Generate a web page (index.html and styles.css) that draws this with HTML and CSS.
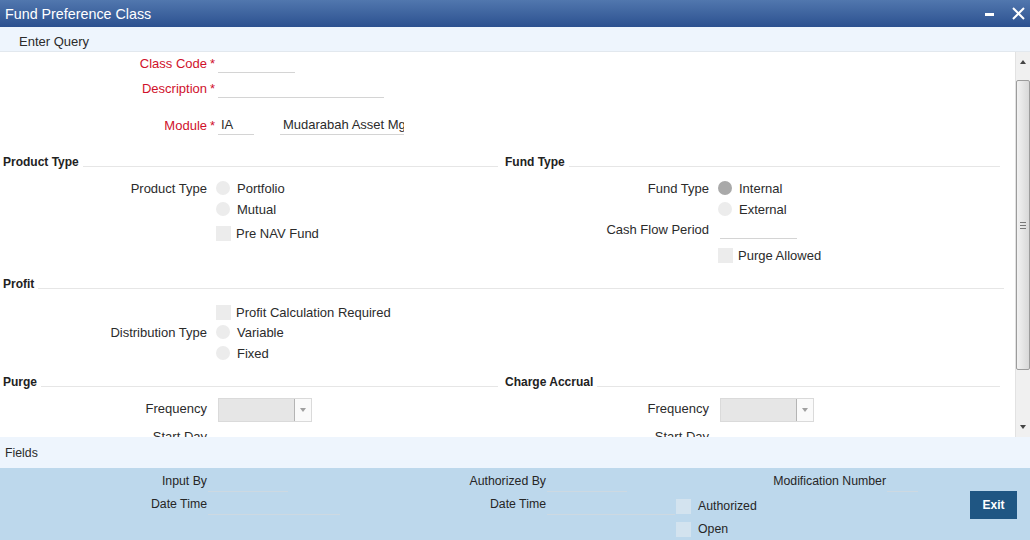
FILE: index.html
```html
<!DOCTYPE html>
<html lang="en">
<head>
    <meta charset="UTF-8">
    <title>Fund Preference Class</title>
    <link rel="stylesheet" href="styles.css">
</head>
<body>
    <div class="window">
        <div class="titlebar">
            <span class="title">Fund Preference Class</span>
            <div class="winbtns">
                <span class="minbtn"></span>
                <svg class="closebtn" width="13" height="13" viewBox="0 0 13 13">
                    <path d="M1 1 L12 12 M12 1 L1 12" stroke="#fff" stroke-width="2" fill="none"/>
                </svg>
            </div>
        </div>
        <div class="toolbar"><span>Enter Query</span></div>

        <div class="main">
            <div class="form">
                <div class="row tall">
                    <span class="lbl req">Class Code</span><span class="star">*</span>
                    <input class="txt w77" type="text">
                </div>
                <div class="row tall mt3">
                    <span class="lbl req">Description</span><span class="star">*</span>
                    <input class="txt w166" type="text">
                </div>
                <div class="row tall mt15">
                    <span class="lbl req">Module</span><span class="star">*</span>
                    <input class="txt w36" type="text" value="IA">
                    <input class="txt w124 ml26" type="text" value="Mudarabah Asset Mgr">
                </div>

                <div class="cols mt18">
                    <div class="col">
                        <div class="sec-head">Product Type</div>
                        <div class="row mt8">
                            <span class="lbl">Product Type</span><span class="gap"></span>
                            <span class="radio"></span><span>Portfolio</span>
                        </div>
                        <div class="row mt1">
                            <span class="lbl"></span><span class="gap"></span>
                            <span class="radio"></span><span>Mutual</span>
                        </div>
                        <div class="row mt4">
                            <span class="lbl"></span><span class="gap"></span>
                            <span class="check"></span><span>Pre NAV Fund</span>
                        </div>
                    </div>
                    <div class="col">
                        <div class="sec-head">Fund Type</div>
                        <div class="row mt8">
                            <span class="lbl">Fund Type</span><span class="gap"></span>
                            <span class="radio on"></span><span>Internal</span>
                        </div>
                        <div class="row mt1">
                            <span class="lbl"></span><span class="gap"></span>
                            <span class="radio"></span><span>External</span>
                        </div>
                        <div class="row tall mtn1">
                            <span class="lbl">Cash Flow Period</span><span class="star"></span>
                            <input class="txt w77" type="text">
                        </div>
                        <div class="row mt5">
                            <span class="lbl"></span><span class="gap"></span>
                            <span class="check"></span><span>Purge Allowed</span>
                        </div>
                    </div>
                </div>

                <div class="sec-head wide mt11">Profit</div>
                <div class="row mt10">
                    <span class="lbl"></span><span class="gap"></span>
                    <span class="check"></span><span>Profit Calculation Required</span>
                </div>
                <div class="row">
                    <span class="lbl">Distribution Type</span><span class="gap"></span>
                    <span class="radio"></span><span>Variable</span>
                </div>
                <div class="row mt1">
                    <span class="lbl"></span><span class="gap"></span>
                    <span class="radio"></span><span>Fixed</span>
                </div>

                <div class="cols mt11">
                    <div class="col">
                        <div class="sec-head">Purge</div>
                        <div class="row sel-row mt8">
                            <span class="lbl">Frequency</span><span class="star"></span>
                            <div class="select"><span class="arrow"></span></div>
                        </div>
                        <div class="row mt4">
                            <span class="lbl">Start Day</span>
                        </div>
                    </div>
                    <div class="col">
                        <div class="sec-head">Charge Accrual</div>
                        <div class="row sel-row mt8">
                            <span class="lbl">Frequency</span><span class="star"></span>
                            <div class="select"><span class="arrow"></span></div>
                        </div>
                        <div class="row mt4">
                            <span class="lbl">Start Day</span>
                        </div>
                    </div>
                </div>
            </div>

            <div class="vscroll">
                <div class="sb-btn"><span class="tri-up"></span></div>
                <div class="thumb"><span class="grip"></span></div>
                <div class="sb-fill"></div>
                <div class="sb-btn"><span class="tri-down"></span></div>
            </div>
        </div>

        <div class="fieldsbar">Fields</div>

        <div class="audit">
            <div class="aud-col c1">
                <div class="arow"><span class="albl">Input By</span><span class="aline w80"></span></div>
                <div class="arow"><span class="albl">Date Time</span><span class="aline w133"></span></div>
            </div>
            <div class="aud-col c2">
                <div class="arow"><span class="albl">Authorized By</span><span class="aline w80"></span></div>
                <div class="arow"><span class="albl">Date Time</span><span class="aline w128"></span></div>
            </div>
            <div class="aud-col c3">
                <div class="crow"><span class="acheck"></span><span>Authorized</span></div>
                <div class="crow"><span class="acheck"></span><span>Open</span></div>
            </div>
            <div class="aud-col c4">
                <div class="arow"><span class="albl">Modification Number</span><span class="aline w31"></span></div>
            </div>
            <button class="exit">Exit</button>
        </div>
    </div>
</body>
</html>
```

FILE: styles.css
```css
* {
    margin: 0;
    padding: 0;
    box-sizing: border-box;
}
body {
    font-family: "Liberation Sans", Arial, sans-serif;
    font-size: 13px;
    color: #2b2b2b;
    background: #fff;
}
.window {
    width: 1030px;
    height: 540px;
    display: flex;
    flex-direction: column;
    overflow: hidden;
}

/* title + toolbar */
.titlebar {
    height: 27px;
    background: linear-gradient(#5177ae, #2c5190);
    display: flex;
    align-items: center;
    padding: 0 5px;
    color: #fff;
}
.title {
    font-size: 14.3px;
    flex: 1;
}
.winbtns {
    display: flex;
    align-items: center;
}
.minbtn {
    width: 9px;
    height: 3px;
    background: #fff;
    margin-right: 18px;
    margin-top: 1px;
}
.toolbar {
    height: 25px;
    background: #eef5fd;
    border-bottom: 1px solid #e2e8ee;
    display: flex;
    align-items: center;
    padding-left: 19px;
    padding-top: 4px;
}

/* main form */
.main {
    height: 385px;
    display: flex;
}
.form {
    flex: 1;
    overflow: hidden;
    padding-right: 11px;
}
.row {
    display: flex;
    align-items: center;
    height: 20px;
    white-space: nowrap;
}
.row.tall {
    height: 22px;
}
.row.sel-row {
    height: 24px;
}
.lbl {
    width: 207px;
    text-align: right;
    flex-shrink: 0;
}
.sel-row .lbl {
    margin-bottom: 3px;
}
.lbl.req {
    color: #d0112b;
}
.star {
    width: 11px;
    padding-left: 3px;
    color: #d0112b;
    flex-shrink: 0;
}
.gap {
    width: 9px;
    flex-shrink: 0;
}
.txt {
    height: 21px;
    border: none;
    border-bottom: 1px solid #d4d4d4;
    background: transparent;
    font-family: inherit;
    font-size: 13px;
    color: #2b2b2b;
    padding: 0 0 0 3px;
    outline: none;
    align-self: flex-start;
}
.w36 { width: 36px; }
.w77 { width: 77px; }
.w124 { width: 124px; }
.w166 { width: 166px; }
.ml26 { margin-left: 26px; }

.radio {
    width: 14px;
    height: 14px;
    border-radius: 50%;
    background: #ececec;
    margin-right: 7px;
    flex-shrink: 0;
}
.radio.on {
    background: #a9a9a9;
}
.check {
    width: 15px;
    height: 15px;
    background: #ececec;
    margin-right: 5px;
    flex-shrink: 0;
}

.cols {
    display: flex;
}
.col {
    width: 502px;
}
.sec-head {
    display: flex;
    align-items: center;
    height: 16px;
    font-size: 12px;
    font-weight: bold;
    color: #222;
    padding-left: 3px;
}
.sec-head::after {
    content: "";
    flex: 1;
    height: 1px;
    background: #e6e6e6;
    margin: 8px 4px 0 4px;
}
.sec-head.wide::after {
    margin-right: 0;
}

.select {
    width: 94px;
    height: 24px;
    background: #e6e6e6;
    border: 1px solid #dadada;
    display: flex;
    justify-content: flex-end;
}
.select .arrow {
    width: 17px;
    height: 22px;
    background: #fafafa;
    border-left: 1px solid #b4b4b4;
    display: flex;
    align-items: center;
    justify-content: center;
}
.select .arrow::before {
    content: "";
    border-left: 3px solid transparent;
    border-right: 3px solid transparent;
    border-top: 4px solid #a0a0a0;
}

.mt1 { margin-top: 1px; }
.mtn1 { margin-top: -1px; }
.mt3 { margin-top: 3px; }
.mt4 { margin-top: 4px; }
.mt5 { margin-top: 5px; }
.mt8 { margin-top: 8px; }
.mt10 { margin-top: 10px; }
.mt11 { margin-top: 11px; }
.mt15 { margin-top: 15px; }
.mt18 { margin-top: 18px; }

/* scrollbar */
.vscroll {
    width: 15px;
    background: #f0f0f0;
    border-left: 1px solid #e2e2e2;
    display: flex;
    flex-direction: column;
    align-items: center;
}
.sb-btn {
    height: 20px;
    display: flex;
    align-items: center;
    justify-content: center;
    width: 100%;
}
.tri-up {
    border-left: 3px solid transparent;
    border-right: 3px solid transparent;
    border-bottom: 4px solid #444;
}
.tri-down {
    border-left: 3px solid transparent;
    border-right: 3px solid transparent;
    border-top: 4px solid #444;
}
.thumb {
    margin-top: 8px;
    width: 14px;
    height: 290px;
    border: 1px solid #9c9c9c;
    border-radius: 2px;
    background: linear-gradient(to right, #f2f2f2, #d8d8d8);
    display: flex;
    justify-content: center;
    align-items: center;
}
.grip {
    width: 6px;
    height: 7px;
    border-top: 1px solid #777;
    border-bottom: 1px solid #777;
    position: relative;
}
.grip::after {
    content: "";
    position: absolute;
    left: 0;
    right: 0;
    top: 2px;
    border-top: 1px solid #777;
}
.sb-fill {
    flex: 1;
}

/* footer */
.fieldsbar {
    height: 31px;
    background: #eef5fd;
    padding-left: 5px;
    display: flex;
    align-items: center;
    font-size: 12.3px;
}
.audit {
    height: 72px;
    background: #bdd8ec;
    display: flex;
    padding-top: 2px;
    font-size: 12.3px;
    color: #262626;
}
.aud-col.c1 { width: 340px; }
.aud-col.c2 { width: 335px; }
.aud-col.c3 { width: 90px; padding-top: 26px; padding-left: 1px; }
.aud-col.c4 { width: 160px; }
.c2 .albl { width: 206px; }
.c4 .albl { width: 121px; }
.arow {
    display: flex;
    align-items: center;
    height: 22px;
    margin-bottom: 1px;
}
.albl {
    width: 207px;
    text-align: right;
    flex-shrink: 0;
}
.aline {
    height: 18px;
    border-bottom: 1px solid #cdd9e2;
    margin-left: 1px;
    margin-top: 4px;
}
.w31 { width: 31px; }
.w80 { width: 80px; }
.w128 { width: 128px; }
.w133 { width: 133px; }
.crow {
    display: flex;
    align-items: center;
    height: 20px;
    margin-bottom: 3px;
}
.acheck {
    width: 15px;
    height: 15px;
    background: #d3e3ef;
    margin-right: 7px;
}
.exit {
    margin-left: auto;
    margin-right: 13px;
    margin-top: 21px;
    width: 47px;
    height: 28px;
    background: #1f5683;
    color: #fff;
    border: none;
    font-family: inherit;
    font-size: 12px;
    font-weight: bold;
}
```
